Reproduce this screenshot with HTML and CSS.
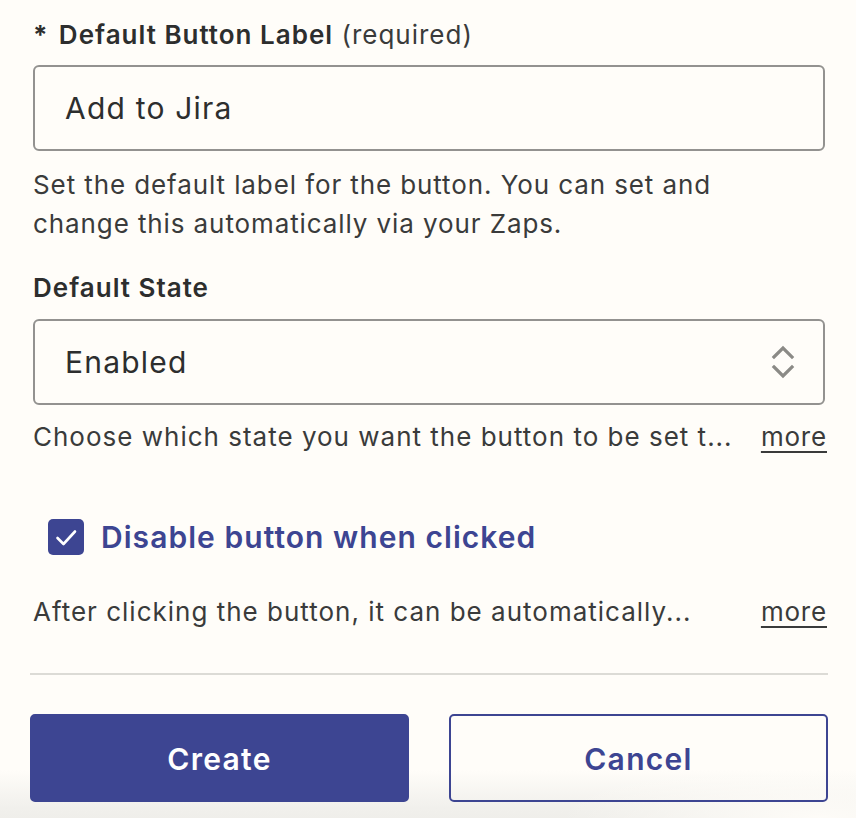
FILE: index.html
```html
<!DOCTYPE html>
<html>
<head>
<meta charset="utf-8">
<link rel="stylesheet" href="styles.css">
</head>
<body>
<div class="panel">
  <div class="field-label"><span class="req">*</span> <span class="strong">Default Button Label</span> <span class="muted">(required)</span></div>
  <div class="input"><span>Add to Jira</span></div>
  <p class="desc">Set the default label for the button. You can set and change this automatically via your Zaps.</p>

  <div class="field-label gap-top"><span class="strong">Default State</span></div>
  <div class="input select">
    <span>Enabled</span>
    <svg class="chev" width="24" height="36" viewBox="0 0 24 36" fill="none" stroke="#8b8a86" stroke-width="3.2" stroke-linecap="square">
      <path d="M3 13 L12 4 L21 13"/>
      <path d="M3 23 L12 32 L21 23"/>
    </svg>
  </div>
  <div class="desc-row"><span class="trunc">Choose which state you want the button to be set t...</span><a class="more">more</a></div>

  <div class="check-row">
    <span class="checkbox">
      <svg width="36" height="36" viewBox="0 0 36 36" fill="none" stroke="#fff" stroke-width="2.6" stroke-linecap="round" stroke-linejoin="round"><path d="M9.5 19 L15.5 25 L27 12.5"/></svg>
    </span>
    <span class="check-label">Disable button when clicked</span>
  </div>
  <div class="desc-row second"><span class="trunc">After clicking the button, it can be automatically...</span><a class="more">more</a></div>

  <hr class="divider">
  <div class="actions">
    <button class="btn primary">Create</button>
    <button class="btn secondary">Cancel</button>
  </div>
</div>
</body>
</html>
```
FILE: styles.css
```css
html, body {
  margin: 0;
  padding: 0;
  font-family: Inter, "Noto Sans", sans-serif;
  color: #2d2e2e;
}
html { background: #fffdf9; }
body {
  width: 856px;
  height: 818px;
  overflow: hidden;
  background:
    radial-gradient(ellipse 260px 60px at 820px 818px, rgba(255,253,249,0.9), rgba(255,253,249,0) 100%),
    linear-gradient(to bottom, #fffdf9 0, #fffdf9 770px, #f1f0ec 808px, #efeeea 818px);
}
.panel {
  padding: 20px 28px 0 30px;
  display: flex;
  flex-direction: column;
}
.field-label {
  margin: 0 3px;
  font-size: 26px;
  line-height: 30px;
  letter-spacing: 1px;
  color: #2d2e2e;
}
.field-label .req { font-weight: 700; margin-right: 2px; }
.field-label .strong { font-weight: 600; }
.field-label .muted { font-weight: 400; color: #3a3b3b; }
.gap-top { margin-top: 30px; }
.input {
  margin: 15px 3px 0;
  height: 86px;
  box-sizing: border-box;
  border: 2px solid #939290;
  border-radius: 6px;
  padding: 0 30px;
  display: flex;
  align-items: center;
  font-size: 30px;
  letter-spacing: 1.2px;
  color: #2d2e2e;
}
.select {
  margin-top: 16px;
  justify-content: space-between;
  padding-right: 28px;
}
.chev { display: block; }
.desc {
  margin: 14px 3px 0;
  font-size: 26px;
  line-height: 39px;
  letter-spacing: 0.9px;
  color: #3a3b3b;
  width: 720px;
}
.desc-row {
  margin: 12px 1px 0 3px;
  display: flex;
  justify-content: space-between;
  align-items: center;
  font-size: 26px;
  line-height: 39px;
  letter-spacing: 1px;
  color: #3a3b3b;
}
.desc-row.second { margin-top: 35px; }
.more {
  text-decoration: underline;
  text-underline-offset: 5px;
  text-decoration-thickness: 2px;
  color: #3a3b3b;
  letter-spacing: 0.8px;
}
.check-row {
  margin: 61px 0 0 18px;
  display: flex;
  align-items: center;
  height: 40px;
}
.checkbox {
  width: 36px;
  height: 36px;
  background: #3d4592;
  border-radius: 5px;
  display: flex;
  align-items: center;
  justify-content: center;
}
.check-label {
  margin-left: 17px;
  font-size: 30px;
  font-weight: 600;
  letter-spacing: 1.05px;
  color: #3d4592;
}
.divider {
  margin: 42px 0 0;
  border: 0;
  height: 2px;
  background: #dcdbd6;
}
.actions {
  margin-top: 39px;
  display: grid;
  grid-template-columns: 1fr 1fr;
  gap: 40px;
}
.btn {
  height: 88px;
  border-radius: 5px;
  padding-top: 2px;
  font-family: Inter, "Noto Sans", sans-serif;
  font-size: 30px;
  font-weight: 600;
  letter-spacing: 1.3px;
  cursor: pointer;
}
.primary {
  background: #3d4592;
  color: #fff;
  border: 2px solid #3d4592;
}
.secondary {
  background: transparent;
  color: #3d4592;
  border: 2px solid #3d4592;
}
```
